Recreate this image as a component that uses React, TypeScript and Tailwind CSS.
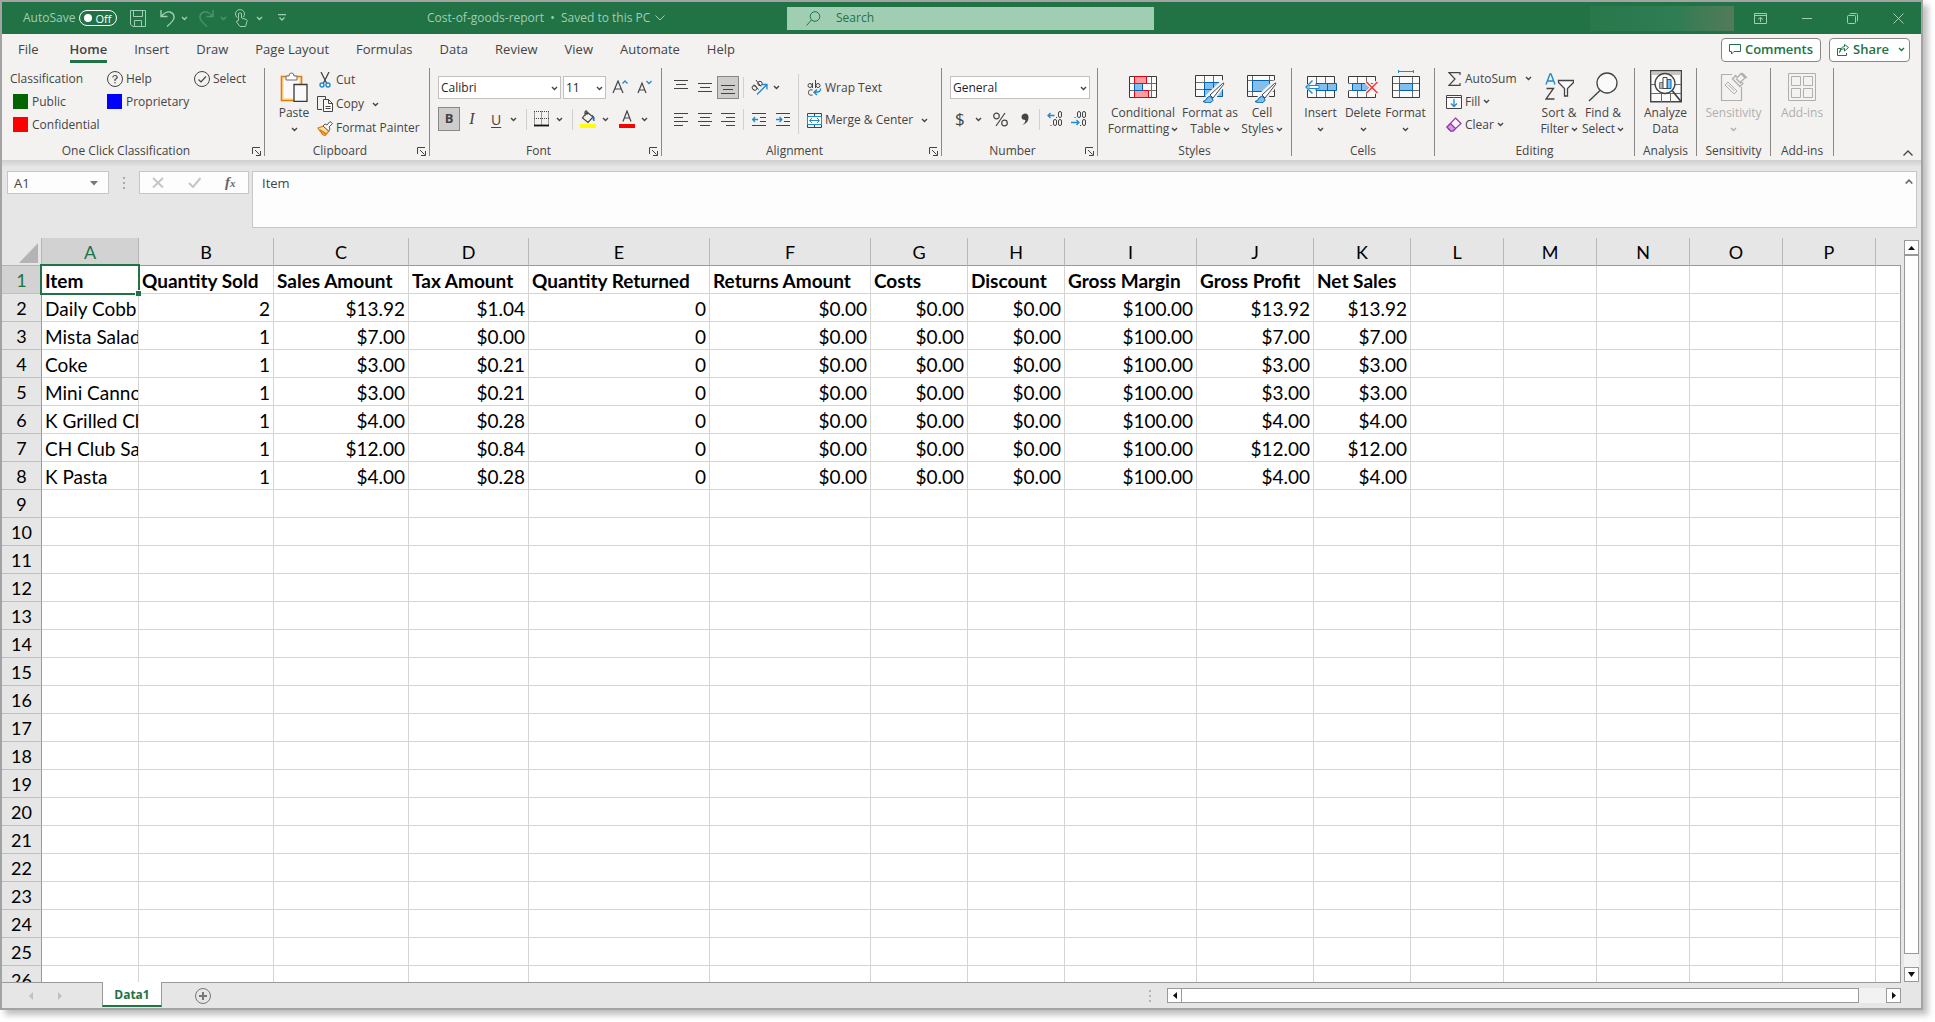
import type { ReactNode } from "react"
import clsx from "clsx"

const tabs = ["File", "Home", "Insert", "Draw", "Page Layout", "Formulas", "Data", "Review", "View", "Automate", "Help"]

const columns = [
  { id: "A", width: "w-[97px]" },
  { id: "B", width: "w-[135px]" },
  { id: "C", width: "w-[135px]" },
  { id: "D", width: "w-[120px]" },
  { id: "E", width: "w-[181px]" },
  { id: "F", width: "w-[161px]" },
  { id: "G", width: "w-[97px]" },
  { id: "H", width: "w-[97px]" },
  { id: "I", width: "w-[132px]" },
  { id: "J", width: "w-[117px]" },
  { id: "K", width: "w-[97px]" },
  { id: "L", width: "w-[93px]" },
  { id: "M", width: "w-[93px]" },
  { id: "N", width: "w-[93px]" },
  { id: "O", width: "w-[93px]" },
  { id: "P", width: "w-[93px]" },
  { id: "", width: "" },
]

const sheet = [
  ["Item", "Quantity Sold", "Sales Amount", "Tax Amount", "Quantity Returned", "Returns Amount", "Costs", "Discount", "Gross Margin", "Gross Profit", "Net Sales"],
  ["Daily Cobb", "2", "$13.92", "$1.04", "0", "$0.00", "$0.00", "$0.00", "$100.00", "$13.92", "$13.92"],
  ["Mista Salad", "1", "$7.00", "$0.00", "0", "$0.00", "$0.00", "$0.00", "$100.00", "$7.00", "$7.00"],
  ["Coke", "1", "$3.00", "$0.21", "0", "$0.00", "$0.00", "$0.00", "$100.00", "$3.00", "$3.00"],
  ["Mini Canno", "1", "$3.00", "$0.21", "0", "$0.00", "$0.00", "$0.00", "$100.00", "$3.00", "$3.00"],
  ["K Grilled Ch", "1", "$4.00", "$0.28", "0", "$0.00", "$0.00", "$0.00", "$100.00", "$4.00", "$4.00"],
  ["CH Club Sa", "1", "$12.00", "$0.84", "0", "$0.00", "$0.00", "$0.00", "$100.00", "$12.00", "$12.00"],
  ["K Pasta", "1", "$4.00", "$0.28", "0", "$0.00", "$0.00", "$0.00", "$100.00", "$4.00", "$4.00"],
]

const ROWS = 26

/* ---------- small pieces ---------- */

function Svg({ w, h, className, children }: { w: number; h: number; className?: string; children: ReactNode }) {
  return (
    <svg width={w} height={h} viewBox={`0 0 ${w} ${h}`} fill="none" stroke="currentColor" className={clsx("shrink-0", className)} aria-hidden="true">
      {children}
    </svg>
  )
}

function Chevron({ className }: { className?: string }) {
  return (
    <Svg w={7} h={5} className={className}>
      <path d="M1 1l2.500 2.500L6 1" strokeWidth="1.400" />
    </Svg>
  )
}

function Launcher({ label }: { label: string }) {
  return (
    <button aria-label={label} className="absolute right-[3px] bottom-0">
      <Svg w={9} h={9}>
        <path d="M.5 7V.5H8M3 3l4.500 4.500M8.500 4v4.500H4" />
      </Svg>
    </button>
  )
}

function Group({ title, width, launcher, children }: { title: string; width: string; launcher?: boolean; children: ReactNode }) {
  return (
    <section className={clsx("relative flex shrink-0 flex-col border-r border-[#8a8886]", width)}>
      <div className="h-[75px] shrink-0">{children}</div>
      <div className={clsx("shrink-0 text-center leading-4", launcher && "pr-[14px]")}>{title}</div>
      {launcher && <Launcher label={`${title} settings`} />}
    </section>
  )
}

function Big({ icon, lines, chevron, width, disabled }: { icon: ReactNode; lines: string[]; chevron?: boolean; width: string; disabled?: boolean }) {
  return (
    <button disabled={disabled} className={clsx("flex shrink-0 flex-col items-center whitespace-nowrap leading-4", width, disabled && "text-[#b1afad]")}>
      <span className="flex h-[37px] items-center">{icon}</span>
      <span>{lines[0]}</span>
      <span className="flex h-4 items-center gap-[2px]">
        {lines[1]}
        {chevron && <Chevron />}
      </span>
    </button>
  )
}

function Small({ icon, label, chevron, wide }: { icon: ReactNode; label: string; chevron?: boolean; wide?: boolean }) {
  return (
    <button className="flex h-6 items-center whitespace-nowrap">
      <span className="mr-[3px] flex w-4 justify-center">{icon}</span>
      {label}
      {chevron && <Chevron className={wide ? "ml-2" : "ml-[3px]"} />}
    </button>
  )
}

function Divider() {
  return <span className="h-[21px] w-px bg-[#d2d0ce]" />
}

function Picker({ label, value, width }: { label: string; value: string; width: string }) {
  return (
    <label className={clsx("relative block", width)}>
      <select aria-label={label} className="h-[23px] w-full appearance-none border border-[#c3c1bf] bg-white pl-[2px] text-[#1f1f1f] outline-none">
        <option>{value}</option>
      </select>
      <Chevron className="pointer-events-none absolute top-[10px] right-[3px]" />
    </label>
  )
}

function Swatch({ color }: { color: string }) {
  return <span className={clsx("size-[15px]", color)} />
}

/* ---------- icons ---------- */

function LinesIcon({ rows, y = 1 }: { rows: number[][]; y?: number }) {
  return (
    <Svg w={14} h={15}>
      {rows.map(([a, b], i) => (
        <path key={i} d={`M${a} ${y + i * 4 - 0.5}H${b}`} />
      ))}
    </Svg>
  )
}

const indentRows = <path d="M0 1.500h14M8 5.500h6M8 9.500h6M0 13.500h14" />

function BrushIcon() {
  return (
    <>
      <path d="M13 21L27 7.500q3-1.500 2 1.500L17 25z" fill="#fff" stroke="#f3f2f1" strokeWidth="4" />
      <path d="M15 20L27.500 8.500q2-1.500 1 1L18 23z" fill="#fff" stroke="#444" />
      <path d="M8 26.500q3-.5 4-3.500 2-3 5-.5 2.500 3-1 5-4 1.500-8-1z" fill="#83beec" stroke="#0063b1" />
    </>
  )
}

function PasteIcon() {
  return (
    <Svg w={28} h={30}>
      <path d="M1.500 4.500h20v24h-20z" fill="#fce5a8" stroke="#e07b10" strokeWidth="1.600" />
      <path d="M4 7h15v19H4z" fill="#fafafa" stroke="none" />
      <path d="M6 8V4h3q0-3 2.500-3T14 4h3v4z" fill="#fff" stroke="#6b6b6b" />
      <path d="M14 12.500h13v17H14z" fill="#fafafa" stroke="#3b3a39" strokeWidth="1.300" />
    </Svg>
  )
}

function CutIcon() {
  return (
    <Svg w={12} h={16}>
      <path d="M2 0l5.500 11M10 0L4.500 11" strokeWidth="1.300" />
      <circle cx="3" cy="13" r="2" stroke="#1e8bcd" strokeWidth="1.400" />
      <circle cx="9" cy="13" r="2" stroke="#1e8bcd" strokeWidth="1.400" />
    </Svg>
  )
}

function CopyIcon() {
  return (
    <Svg w={16} h={16}>
      <path d="M5 13.500H.5V.5h8V3" />
      <path d="M6.500 3.500h5l4 4v8h-9z" fill="#fafafa" />
      <path d="M11.500 3.500v4h4M8.500 10.500h5M8.500 12.500h5" />
    </Svg>
  )
}

function PainterIcon() {
  return (
    <Svg w={16} h={15}>
      <path d="M1 7l6-2 5 5-4 4.500q-3-1-4-3.500Q2 9 1 7z" fill="#fce0a0" stroke="#e07b10" strokeWidth="1.300" />
      <path d="M3 9l6 4" stroke="#e07b10" strokeWidth="1.600" />
      <path d="M6 5l2-2 2 1 3-3.500 2.500 2L12 6l1 2-1.500 2z" fill="#fff" stroke="#555" />
    </Svg>
  )
}

function TableBase() {
  return (
    <>
      <path d="M.5.5h27v21H.5z" fill="#fafafa" stroke="#3b3a39" />
      <path d="M1 7.500h26M1 14.500h26M9.500 1v20M18.500 1v20" stroke="#6b6b6b" />
    </>
  )
}

function ConditionalIcon() {
  return (
    <Svg w={28} h={22}>
      <path d="M.5.5h27v21H.5z" fill="#fafafa" stroke="#3b3a39" />
      <path d="M1 7.500h26M1 14.500h26M5.500 1v20M22.500 1v20" stroke="#6b6b6b" />
      <path d="M5.500.5h12v7h-12zM5.500 14.500h14v7h-14z" fill="#ff9ba0" stroke="#e3000f" />
      <path d="M5.500 7.500h8v7h-8z" fill="#83beec" stroke="#0063b1" />
    </Svg>
  )
}

function FormatTableIcon() {
  return (
    <Svg w={30} h={28} className="mt-[5px]">
      <TableBase />
      <path d="M9.500 7.500h18v14h-18z" fill="#83beec" stroke="#0063b1" />
      <path d="M9.500 14.500h18M18.500 7.500v14" stroke="#0063b1" />
      <BrushIcon />
    </Svg>
  )
}

function CellStylesIcon() {
  return (
    <Svg w={30} h={28} className="mt-[5px]">
      <path d="M.5.5h27v21H.5z" fill="#fafafa" stroke="#3b3a39" />
      <path d="M1 5.500h26M1 16.500h26M5.500 1v20M22.500 1v20" stroke="#6b6b6b" />
      <path d="M5.500 5.500h17v11h-17z" fill="#83beec" stroke="#0063b1" />
      <BrushIcon />
    </Svg>
  )
}

function InsertIcon() {
  return (
    <Svg w={32} h={22}>
      <path d="M2.500.5h27v21h-27z" fill="#fafafa" stroke="#3b3a39" />
      <path d="M11.500 1v20M20.500 1v20" stroke="#6b6b6b" />
      <path d="M11 7.500h20.500v7H11z" fill="#83beec" stroke="#0063b1" />
      <path d="M22.500 8v6" stroke="#0063b1" />
      <path d="M0 8h3v6H0z" fill="#f3f2f1" stroke="none" />
      <path d="M14 9.500H4v3h10z" fill="#fff" stroke="#1e8bcd" />
      <path d="M7.500 4.500L1 11l6.500 6.500" stroke="#1e8bcd" strokeWidth="1.400" />
    </Svg>
  )
}

function DeleteIcon() {
  return (
    <Svg w={30} h={22}>
      <path d="M.5 7V.5h27V7M.5 15v6.500h27V15" fill="#fafafa" stroke="#3b3a39" />
      <path d="M.5 7.500h27M.5 14.500h27M9.500 1v6M18.500 1v6M9.500 15v6M18.500 15v6" stroke="#6b6b6b" />
      <path d="M4.500 7.500h14l3 3.500-3 3.500h-14z" fill="#83beec" stroke="#0063b1" />
      <path d="M13.500 8v6" stroke="#0063b1" />
      <path d="M18.500 6l11 11M29.500 6l-11 11" stroke="#f3f2f1" strokeWidth="4" />
      <path d="M18.500 6l11 11M29.500 6l-11 11" stroke="#f03a3e" strokeWidth="1.500" />
    </Svg>
  )
}

function FormatIcon() {
  return (
    <Svg w={28} h={28} className="-mt-[6px]">
      <path d="M6.500 0v3M21.500 0v3M6.500 1.500h15" stroke="#1e8bcd" />
      <path d="M.5 6.500h27v21H.5z" fill="#fafafa" stroke="#3b3a39" />
      <path d="M1 13.500h26M1 20.500h26M7.500 7v20M20.500 7v20" stroke="#6b6b6b" />
      <path d="M7.500 13.500h13v7h-13z" fill="#83beec" stroke="#0063b1" />
    </Svg>
  )
}

function SortIcon() {
  return (
    <Svg w={29} h={27}>
      <path d="M1 11.500L5 1h1l4 10.500M2.500 8h6" stroke="#1e8bcd" strokeWidth="1.400" />
      <path d="M1.500 15.500h7L1 26h8.500" strokeWidth="1.300" />
      <path d="M13.500 7.500h15v2l-6 6V23h-3v-7.500l-6-6z" fill="#fafafa" strokeWidth="1.300" />
    </Svg>
  )
}

function FindIcon() {
  return (
    <Svg w={30} h={30}>
      <circle cx="19" cy="11" r="10" fill="#fafafa" strokeWidth="1.300" />
      <path d="M12 18.500L1 29" strokeWidth="1.400" />
    </Svg>
  )
}

function AnalyzeIcon() {
  return (
    <Svg w={32} h={33}>
      <path d="M.7.7h30.600v31H.7z" fill="#fafafa" strokeWidth="1.400" />
      <path d="M1.500 1.500h29v3.500h-29z" fill="#c8c6c4" stroke="none" />
      <path d="M1 14.500h30M1 23.500h30M11.500 23v9M20.500 23v9" stroke="#6b6b6b" />
      <circle cx="15" cy="13.500" r="10" fill="#fafafa" strokeWidth="1.300" />
      <path d="M9.500 12.500h4v6h-4z" fill="#b5b3b1" stroke="#797775" />
      <path d="M17 9.500h4v9h-4z" fill="#83beec" stroke="#0063b1" />
      <path d="M13 7.500h4v11h-4z" fill="#fff" />
      <path d="M22.500 21L31 31.500" strokeWidth="1.800" />
    </Svg>
  )
}

function SensitivityIcon() {
  return (
    <Svg w={28} h={30}>
      <path d="M12 2.500H1.500v26h20V15" strokeWidth="1.200" />
      <path d="M5 13l3-3 9 9-3 3zM8 12.500l6.500 6.500" />
      <path d="M12.500 7l3-3.500 2 2L21 1.500l4 4.500-4 3.500 2 2-3 3zM22 1l5 5M16 6.500l5 5" strokeWidth="1.300" />
    </Svg>
  )
}

function AddinsIcon() {
  return (
    <Svg w={28} h={28}>
      <path d="M.5.5h27v27H.5zM3.500 3.500h9v9h-9zM15.500 3.500h9v9h-9zM3.500 15.500h9v9h-9zM15.500 15.500h9v9h-9z" />
    </Svg>
  )
}

/* ---------- bars ---------- */

function TitleBar() {
  return (
    <header className="flex h-8 items-center bg-[#217346] text-[#a0ceb3]">
      <div className="flex w-[425px] items-center pl-[21px]">
        <span>AutoSave</span>
        <button className="ml-1 flex h-4 w-[38px] items-center justify-between rounded-full border border-white pr-[5px] pl-[4px] text-[11px] leading-none text-white">
          <span className="size-2 rounded-full bg-white" />
          Off
        </button>
        <button aria-label="Save" className="ml-[13px]">
          <Svg w={16} h={17}>
            <path d="M.5.5h15v16H3l-2.500-2zM3.500.5v6h9v-6M4.500 16.500v-6h7v6" />
          </Svg>
        </button>
        <button aria-label="Undo" className="ml-[14px] flex items-center gap-[6px]">
          <Svg w={15} h={17}>
            <path d="M1 0v6.500h6.500M1 6.500Q6 1 10 2q4.500 1.500 4 6-.5 3-7 8.500" strokeWidth="1.400" />
          </Svg>
          <Chevron />
        </button>
        <button aria-label="Redo" className="ml-[11px] flex items-center gap-[6px] text-[#4f9470]">
          <Svg w={15} h={17}>
            <path d="M14 0v6.500H7.500M14 6.500Q9 1 5 2 .5 3.500 1 8q.5 3 7 8.500" strokeWidth="1.400" />
          </Svg>
          <Chevron />
        </button>
        <button aria-label="Touch mode" className="ml-2 flex items-center gap-[8px]">
          <Svg w={13} h={18}>
            <path d="M2 8.500Q.5 7 .5 5a4.500 4.500 0 019 0q0 1.500-1 3" />
            <path d="M3.500 11.500V4.500q1.500-1.500 3 0V9l5 1.500q.8.500.5 2l-1.500 5H5L1.500 13q0-1.500 2-1.500z" />
          </Svg>
          <Chevron />
        </button>
        <button aria-label="Customize toolbar" className="ml-[15px]">
          <Svg w={8} h={8}>
            <path d="M0 .5h8M1.500 3.500L4 6l2.500-2.500" strokeWidth="1.300" />
          </Svg>
        </button>
      </div>
      <button className="flex w-[360px] items-center gap-[5px] whitespace-nowrap">
        <span>Cost-of-goods-report&nbsp; •&nbsp; Saved to this PC</span>
        <Svg w={10} h={6}>
          <path d="M.5.5L5 5 9.500.5" />
        </Svg>
      </button>
      <label className="flex h-[23px] w-[367px] items-center bg-[#a0ceb3] pl-[19px] text-[#217346]">
        <Svg w={15} h={15}>
          <circle cx="9" cy="5.500" r="4.800" />
          <path d="M5.500 9L.5 14.500" />
        </Svg>
        <input aria-label="Search" placeholder="Search" className="ml-[15px] min-w-0 flex-1 outline-none placeholder:text-[#217346]" />
      </label>
      <div className="ml-auto h-[25px] w-[144px] bg-linear-to-r from-[#28784c] via-[#2f7d53] via-60% to-[#527a5a]" />
      <div className="flex items-center gap-[35px] pr-[17px] pl-5">
        <button aria-label="Ribbon display options">
          <Svg w={13} h={11}>
            <path d="M.5.5h12v10H.5zM.5 2.500h12M6.500 9V4.500M4 6.500l2.500-2 2.500 2" />
          </Svg>
        </button>
        <button aria-label="Minimize">
          <Svg w={10} h={11}>
            <path d="M0 5.500h10" />
          </Svg>
        </button>
        <button aria-label="Restore">
          <Svg w={11} h={11}>
            <rect x=".5" y="2.500" width="8" height="8" rx="1" />
            <path d="M2.500 1q.5-.5 1-.5h6q1 0 1 1v6q0 .7-.7 1" />
          </Svg>
        </button>
        <button aria-label="Close">
          <Svg w={11} h={11}>
            <path d="M.5.5l10 10M10.500.5l-10 10" />
          </Svg>
        </button>
      </div>
    </header>
  )
}

function TabBar() {
  return (
    <nav className="flex h-[31px] items-center bg-[#f3f2f1] pr-[11px] pl-4 text-[13px]">
      <div className="flex gap-[27px] pt-[2px]">
        {tabs.map((tab) => (
          <a
            key={tab}
            href="#"
            className={clsx(
              "border-b-[3px] leading-[21px] whitespace-nowrap",
              tab === "Home" ? "ml-1 border-[#217346] font-semibold" : "border-transparent",
            )}
          >
            {tab}
          </a>
        ))}
      </div>
      <div className="ml-auto flex gap-2 font-semibold text-[#217346]">
        <button className="flex h-6 w-[100px] items-center justify-center gap-1 rounded border border-[#8a8886] bg-white">
          <Svg w={12} h={11}>
            <path d="M.5.5h11v7H5L2.500 10V7.500h-2z" />
          </Svg>
          Comments
        </button>
        <button className="flex h-6 w-[81px] items-center rounded border border-[#8a8886] bg-white pr-1 pl-[7px]">
          <Svg w={12} h={12} className="mr-1">
            <path d="M4 4.500H.5v7h9V9M2.500 8.500q1-4 5-4V7l4-3.500-4-3v2q-4 .5-5 6z" />
          </Svg>
          Share
          <Chevron className="ml-auto" />
        </button>
      </div>
    </nav>
  )
}

function Ribbon() {
  return (
    <div className="relative flex h-[95px] bg-[#f3f2f1] pt-[3px] pb-1">
      <Group title="One Click Classification" width="w-[263px]" launcher>
        <div className="-mt-px grid grid-cols-[97px_87px_auto] auto-rows-[23px] items-center pl-2 whitespace-nowrap">
          <span>Classification</span>
          <button className="flex items-center gap-[3px]">
            <Svg w={16} h={16}>
              <circle cx="8" cy="8" r="7.500" />
              <path d="M5.700 6.500Q6 4.500 8 4.500t2.300 1.800Q10.300 7.500 8 8.500V10M8 11v1.300" strokeWidth="1.200" />
            </Svg>
            Help
          </button>
          <button className="flex items-center gap-[3px]">
            <Svg w={16} h={16}>
              <circle cx="8" cy="8" r="7.500" />
              <path d="M4.500 8.500L7 11l5-5.500" strokeWidth="1.200" />
            </Svg>
            Select
          </button>
          <button className="flex items-center gap-1 pl-[3px]">
            <Swatch color="bg-[#006400]" />
            Public
          </button>
          <button className="col-span-2 flex items-center gap-1">
            <Swatch color="bg-[#0000ff]" />
            Proprietary
          </button>
          <button className="flex items-center gap-1 pl-[3px]">
            <Swatch color="bg-[#ff0000]" />
            Confidential
          </button>
        </div>
      </Group>

      <Group title="Clipboard" width="w-[165px]" launcher>
        <div className="flex pl-[9px]">
          <Big icon={<PasteIcon />} lines={["Paste"]} chevron width="w-[40px]" />
          <div className="flex flex-col items-start pl-[3px]">
            <Small icon={<CutIcon />} label="Cut" />
            <Small icon={<CopyIcon />} label="Copy" chevron wide />
            <Small icon={<PainterIcon />} label="Format Painter" />
          </div>
        </div>
      </Group>

      <Group title="Font" width="w-[232px]" launcher>
        <div className="flex flex-col gap-2 pt-2 pl-2">
          <div className="flex items-center">
            <Picker label="Font" value="Calibri" width="w-[123px]" />
            <Picker label="Font size" value="11" width="ml-[2px] w-[43px]" />
            <button aria-label="Increase font size" className="ml-[6px]">
              <Svg w={16} h={16}>
                <path d="M1 13L6 1l5 12M2.700 9h6.600" strokeWidth="1.200" />
                <path d="M10.500 3.500L13 1l2.500 2.500" stroke="#1e8bcd" strokeWidth="1.300" />
              </Svg>
            </button>
            <button aria-label="Decrease font size" className="ml-[9px]">
              <Svg w={15} h={16}>
                <path d="M1 13L5 3l4 10M2.500 10h5" strokeWidth="1.200" />
                <path d="M9.500 1L12 3.500 14.500 1" stroke="#1e8bcd" strokeWidth="1.300" />
              </Svg>
            </button>
          </div>
          <div className="flex items-center">
            <button className="h-6 w-[22px] border border-[#8a8886] bg-[#cfcdcb] text-[13px] font-bold">B</button>
            <button className="ml-[7px] w-[10px] font-['Liberation_Serif',serif] text-[16px] italic">I</button>
            <button className="ml-[14px] flex items-center gap-[9px] text-[14px]">
              <span className="w-[10px] underline underline-offset-2">U</span>
              <Chevron />
            </button>
            <span className="ml-[9px] flex">
              <Divider />
            </span>
            <button aria-label="Borders" className="ml-[7px] flex items-center gap-[7px]">
              <Svg w={15} h={16}>
                <path d="M.5.500v14M14.500.5v14M7.500.5v14M0 .5h15M0 7.500h15" strokeDasharray="1 1" />
                <path d="M0 14.500h15" stroke="#111" strokeWidth="1.800" />
              </Svg>
              <Chevron />
            </button>
            <span className="ml-[9px] flex">
              <Divider />
            </span>
            <button aria-label="Fill color" className="ml-[7px] flex items-center gap-[6px]">
              <Svg w={16} h={18}>
                <path d="M7 2l6 5-5 5.500L2.500 8zM7 5V1.500Q6 0 5 2v4" strokeWidth="1.200" />
                <path d="M12 5q3 1 2 6-1-1-1-3" fill="#1e6fb8" stroke="#1e6fb8" />
                <path d="M0 16h16" stroke="#ffff00" strokeWidth="4" />
              </Svg>
              <Chevron />
            </button>
            <button aria-label="Font color" className="ml-[10px] flex items-center gap-[6px]">
              <Svg w={16} h={18}>
                <path d="M4 11.500L8 1l4 10.500M5.300 8h5.400" strokeWidth="1.200" />
                <path d="M0 16h16" stroke="#ff0000" strokeWidth="4" />
              </Svg>
              <Chevron />
            </button>
          </div>
        </div>
      </Group>

      <Group title="Alignment" width="w-[280px]" launcher>
        <div className="flex pl-[7px]">
          <div className="flex flex-col gap-2 pt-2">
            <div className="flex h-[23px] items-center">
              <button aria-label="Top align" className="flex w-6 justify-center">
                <LinesIcon rows={[[0, 14], [2, 12], [0, 14]]} />
              </button>
              <button aria-label="Middle align" className="flex w-6 justify-center">
                <LinesIcon y={4} rows={[[0, 14], [2, 12], [0, 14]]} />
              </button>
              <button aria-label="Bottom align" className="flex h-[23px] w-[22px] items-center justify-center border border-[#8a8886] bg-[#cfcdcb]">
                <LinesIcon y={6} rows={[[0, 14], [2, 12], [0, 14]]} />
              </button>
              <span className="mr-[7px] ml-1 flex">
                <Divider />
              </span>
              <button aria-label="Orientation" className="flex items-center gap-[5px]">
                <Svg w={17} h={17}>
                  <ellipse cx="3.500" cy="9" rx="2" ry="2.500" transform="rotate(-45 3.500 9)" />
                  <path d="M3 5.500l4.500 5M5 1l5 6.500" />
                  <circle cx="9" cy="4.500" r="2.200" />
                  <path d="M6 15.500L15.500 6M11 5.500h5v5" stroke="#1e8bcd" strokeWidth="1.300" />
                </Svg>
                <Chevron />
              </button>
            </div>
            <div className="flex h-6 items-center">
              <button aria-label="Align left" className="flex w-6 justify-center">
                <LinesIcon rows={[[0, 14], [0, 9], [0, 14], [0, 9]]} y={2} />
              </button>
              <button aria-label="Center" className="flex w-6 justify-center">
                <LinesIcon rows={[[0, 14], [2, 12], [0, 14], [2, 12]]} y={2} />
              </button>
              <button aria-label="Align right" className="flex w-[22px] justify-center">
                <LinesIcon rows={[[0, 14], [5, 14], [0, 14], [5, 14]]} y={2} />
              </button>
              <span className="mr-2 ml-1 flex">
                <Divider />
              </span>
              <button aria-label="Decrease indent">
                <Svg w={14} h={15}>
                  {indentRows}
                  <path d="M6 7.500H1M3 5L.7 7.500 3 10" stroke="#1e8bcd" strokeWidth="1.300" />
                </Svg>
              </button>
              <button aria-label="Increase indent" className="ml-[10px]">
                <Svg w={14} h={15}>
                  {indentRows}
                  <path d="M0 7.500h5.500M3.500 5l2.300 2.500L3.500 10" stroke="#1e8bcd" strokeWidth="1.300" />
                </Svg>
              </button>
            </div>
          </div>
          <span className="mt-[6px] ml-2 h-[60px] w-px bg-[#d2d0ce]" />
          <div className="flex flex-col items-start gap-2 pt-2 pl-[7px]">
            <Small
              label="Wrap Text"
              icon={
                <Svg w={15} h={16}>
                  <circle cx="3" cy="5.500" r="2" />
                  <path d="M5.500 3v5M8.500 0v8M5.500 10q-4-1-4 2.500t4 2.500" />
                  <circle cx="11" cy="5.500" r="2" />
                  <path d="M13.500 8.500q1 4-6 3.800M10 9.500l-3 2.800 3 2.700" stroke="#1e8bcd" strokeWidth="1.400" />
                </Svg>
              }
            />
            <Small
              label="Merge & Center"
              chevron
              wide
              icon={
                <Svg w={15} h={15}>
                  <path d="M.5.5h14v14H.5zM7.500.5v3M7.500 11.500v3" />
                  <path d="M.5 3.500h14v8H.5z" fill="#fff" stroke="#1e8bcd" />
                  <path d="M3 7.500h9M5 5L2.500 7.500 5 10M10 5l2.500 2.500L10 10" stroke="#1e8bcd" />
                </Svg>
              }
            />
          </div>
        </div>
      </Group>

      <Group title="Number" width="w-[156px]" launcher>
        <div className="flex flex-col gap-2 px-2 pt-2">
          <Picker label="Number format" value="General" width="w-[140px]" />
          <div className="flex h-6 items-center">
            <button className="ml-[5px] flex items-center gap-[10px] text-[17px] leading-6">
              $
              <Chevron />
            </button>
            <button aria-label="Percent style" className="ml-[11px]">
              <Svg w={15} h={15}>
                <circle cx="3.500" cy="4" r="2.800" strokeWidth="1.200" />
                <circle cx="11.500" cy="11" r="2.800" strokeWidth="1.200" />
                <path d="M12 1L3 14" strokeWidth="1.200" />
              </Svg>
            </button>
            <button aria-label="Comma style" className="ml-[13px]">
              <Svg w={8} h={13}>
                <path d="M4 .5q3.500 0 3.500 4Q7.500 10 1.500 12q3-2.500 3-5Q.5 7 .5 4T4 .5z" fill="currentColor" stroke="none" />
              </Svg>
            </button>
            <span className="mr-[7px] ml-[10px] flex">
              <Divider />
            </span>
            <button aria-label="Increase decimal">
              <Svg w={16} h={16}>
                <path d="M7.500 4.500H1M3.500 2L1 4.500 3.500 7" stroke="#1e8bcd" strokeWidth="1.300" />
                <rect x="11.500" y=".500" width="3" height="6" rx="1.500" />
                <rect x="6.500" y="8.500" width="3" height="6" rx="1.500" />
                <rect x="11.500" y="8.500" width="3" height="6" rx="1.500" />
                <path d="M9 6.500h1M3.500 14.500h1" />
              </Svg>
            </button>
            <button aria-label="Decrease decimal" className="ml-2">
              <Svg w={16} h={16}>
                <path d="M0 11.500h8M5.500 9L8 11.500 5.500 14" stroke="#1e8bcd" strokeWidth="1.300" />
                <rect x="6.500" y=".500" width="3" height="6" rx="1.500" />
                <rect x="11.500" y=".500" width="3" height="6" rx="1.500" />
                <rect x="11.500" y="8.500" width="3" height="6" rx="1.500" />
                <path d="M3.500 6.500h1M9 14.500h1" />
              </Svg>
            </button>
          </div>
        </div>
      </Group>

      <Group title="Styles" width="w-[194px]">
        <div className="flex pl-[7px]">
          <Big icon={<ConditionalIcon />} lines={["Conditional", "Formatting"]} chevron width="w-[76px]" />
          <Big icon={<FormatTableIcon />} lines={["Format as", "Table"]} chevron width="w-[58px]" />
          <Big icon={<CellStylesIcon />} lines={["Cell", "Styles"]} chevron width="w-[46px]" />
        </div>
      </Group>

      <Group title="Cells" width="w-[143px]">
        <div className="flex pl-[7px]">
          <Big icon={<InsertIcon />} lines={["Insert"]} chevron width="w-[43px]" />
          <Big icon={<DeleteIcon />} lines={["Delete"]} chevron width="w-[42px]" />
          <Big icon={<FormatIcon />} lines={["Format"]} chevron width="w-[43px]" />
        </div>
      </Group>

      <Group title="Editing" width="w-[200px]">
        <div className="flex pl-[11px]">
          <div className="-mt-px grid w-[91px] auto-rows-[23px] items-center justify-items-start">
            <Small
              label="AutoSum"
              chevron
              wide
              icon={
                <Svg w={13} h={14}>
                  <path d="M12 3V.7H1L7 7l-6 6.300h11V11" strokeWidth="1.200" />
                </Svg>
              }
            />
            <Small
              label="Fill"
              chevron
              icon={
                <Svg w={16} h={14}>
                  <path d="M.5.5h15v13H.5zM.5 2.500h15" fill="#fafafa" />
                  <path d="M8 4v7.500M5 8.500l3 3 3-3" stroke="#1e8bcd" strokeWidth="1.300" />
                </Svg>
              }
            />
            <Small
              label="Clear"
              chevron
              icon={
                <Svg w={16} h={15}>
                  <path d="M9.500 1L15 6.500 7 14H4.500L1 10z" fill="#fafafa" stroke="#9b2fae" strokeWidth="1.200" />
                  <path d="M4.500 6.500l5 5L7 14H4.500L1 10z" fill="#d59ae0" stroke="#9b2fae" strokeWidth="1.200" />
                </Svg>
              }
            />
          </div>
          <Big icon={<SortIcon />} lines={["Sort &", "Filter"]} chevron width="w-[44px]" />
          <Big icon={<FindIcon />} lines={["Find &", "Select"]} chevron width="w-[44px]" />
        </div>
      </Group>

      <Group title="Analysis" width="w-[62px]">
        <Big icon={<AnalyzeIcon />} lines={["Analyze", "Data"]} width="w-full" />
      </Group>
      <Group title="Sensitivity" width="w-[74px]">
        <Big icon={<SensitivityIcon />} lines={["Sensitivity"]} chevron disabled width="w-full" />
      </Group>
      <Group title="Add-ins" width="w-[63px]">
        <Big icon={<AddinsIcon />} lines={["Add-ins"]} disabled width="w-full" />
      </Group>

      <button aria-label="Collapse ribbon" className="mr-2 ml-auto self-end">
        <Svg w={10} h={6}>
          <path d="M.5 5.500L5 1l4.500 4.500" strokeWidth="1.300" />
        </Svg>
      </button>
    </div>
  )
}

function FormulaBar() {
  return (
    <div className="flex items-start bg-linear-to-b from-[#cfcfcf] to-[#e6e6e6] to-[7px] pt-[11px] pr-1 pb-[10px] pl-[5px] text-[13px] text-[#444]">
      <label className="relative w-[102px]">
        <input aria-label="Name box" defaultValue="A1" className="h-[23px] w-full border border-[#c6c6c6] bg-[#fdfdfd] pl-[6px] outline-none" />
        <Svg w={8} h={5} className="pointer-events-none absolute top-[10px] right-[11px]">
          <path d="M0 0h8L4 4.500z" fill="#777" stroke="none" />
        </Svg>
      </label>
      <Svg w={3} h={12} className="mt-[6px] ml-[14px]">
        <path d="M1 0v12" stroke="#aaa" strokeWidth="2" strokeDasharray="2 3" />
      </Svg>
      <div className="ml-[13px] flex h-[23px] w-[110px] items-center border border-[#c6c6c6] bg-[#fdfdfd] pl-3">
        <button aria-label="Cancel">
          <Svg w={12} h={11}>
            <path d="M1 1l10 9.500M11 1L1 10.500" stroke="#c6c6c6" strokeWidth="2" />
          </Svg>
        </button>
        <button aria-label="Enter" className="ml-6">
          <Svg w={13} h={11}>
            <path d="M1 6l4 4 7.500-9" stroke="#c6c6c6" strokeWidth="2" />
          </Svg>
        </button>
        <button className="ml-6 font-['Liberation_Serif',serif] text-[15px] font-bold italic leading-none text-[#666]">
          f<span className="text-[11px]">x</span>
        </button>
      </div>
      <div className="relative ml-[3px] flex-1">
        <textarea aria-label="Formula" defaultValue="Item" className="block h-[57px] w-full resize-none border border-[#c6c6c6] bg-[#fdfdfd] px-[9px] py-[2px] leading-[18px] outline-none" />
        <button aria-label="Collapse formula bar" className="absolute top-2 right-1">
          <Svg w={8} h={5}>
            <path d="M.7 4.500L4 1.200l3.300 3.300" stroke="#666" strokeWidth="1.600" />
          </Svg>
        </button>
      </div>
    </div>
  )
}

function Grid() {
  return (
    <div className="min-w-0 flex-1 overflow-hidden">
      <table className="w-full table-fixed border-separate border-spacing-0 font-['Lato',sans-serif] text-[19px] leading-[25px] text-black">
        <thead>
          <tr className="h-7">
            <th className="w-10 border-r border-b border-[#b5b5b5] p-0">
              <Svg w={19} h={20} className="ml-auto mr-[3px] mt-[2px]">
                <path d="M19 0v20H0z" fill="#b4b4b4" stroke="none" />
              </Svg>
            </th>
            {columns.map((col, i) => (
              <th
                key={i}
                className={clsx(
                  "border-b border-[#999] px-0 pt-[2px] pb-0 text-[18px] font-normal",
                  col.width,
                  i < columns.length - 1 && "border-r border-r-[#b8b8b8]",
                  i === 0 && "bg-[#d2d2d2] text-[#217346]",
                )}
              >
                {col.id}
              </th>
            ))}
          </tr>
        </thead>
        <tbody>
          {Array.from({ length: ROWS }, (_, r) => (
            <tr key={r} className="h-7">
              <th
                className={clsx(
                  "border-r border-b border-[#c0c0c0] border-r-[#999] px-0 pt-[2px] pb-0 text-[18px] font-normal",
                  r === 0 ? "bg-[#d2d2d2] text-[#217346]" : "bg-[#e6e6e6]",
                )}
              >
                {r + 1}
              </th>
              {columns.map((_col, c) => (
                <td
                  key={c}
                  className={clsx(
                    "relative border-b border-[#d4d4d4] bg-white px-[3px] py-0 whitespace-nowrap",
                    c < columns.length - 1 ? "border-r" : "border-r border-r-[#999]",
                    r === 0 ? "font-bold" : c > 0 && "text-right",
                  )}
                >
                  <div className={clsx("h-[27px] overflow-hidden pt-[2px]", c === 0 && "-mr-[3px]")}>{sheet[r]?.[c]}</div>
                  {r === 0 && c === 0 && (
                    <>
                      <span className="absolute -top-[2px] -right-[2px] -bottom-[2px] -left-[2px] z-10 border-2 border-[#217346]" />
                      <span className="absolute -right-[3px] -bottom-[3px] z-20 size-[6px] border-t border-l border-white bg-[#217346]" />
                    </>
                  )}
                </td>
              ))}
            </tr>
          ))}
        </tbody>
      </table>
    </div>
  )
}

function ScrollBarY() {
  return (
    <div className="flex w-[20px] flex-col pt-[2px] pr-[2px] pl-[3px]">
      <button aria-label="Scroll up" className="flex h-[15px] shrink-0 items-center justify-center border border-[#999] bg-white">
        <Svg w={7} h={4}>
          <path d="M3.500 0L7 4H0z" fill="#111" stroke="none" />
        </Svg>
      </button>
      <div className="flex-1 bg-[#f2f2f2] pb-[13px]">
        <div className="h-full border border-[#999] bg-white" />
      </div>
      <button aria-label="Scroll down" className="flex h-[15px] shrink-0 items-center justify-center border border-[#999] bg-white">
        <Svg w={7} h={5}>
          <path d="M3.500 5L7 0H0z" fill="#111" stroke="none" />
        </Svg>
      </button>
    </div>
  )
}

function StatusRow() {
  return (
    <footer className="flex h-[26px] shrink-0">
      <div className="flex w-[100px] items-center gap-[25px] border-t border-[#999] pl-[27px]">
        <button aria-label="Previous sheet">
          <Svg w={4} h={8}>
            <path d="M4 0v8L0 4z" fill="#c0c0c0" stroke="none" />
          </Svg>
        </button>
        <button aria-label="Next sheet">
          <Svg w={4} h={8}>
            <path d="M0 0v8l4-4z" fill="#c0c0c0" stroke="none" />
          </Svg>
        </button>
      </div>
      <button className="h-[25px] w-[60px] border-x border-b-2 border-x-[#999] border-b-[#217346] bg-white pt-[2px] text-[12px] font-bold text-[#217346]">
        Data1
      </button>
      <div className="flex flex-1 items-center border-t border-[#999] pl-[33px]">
        <button aria-label="New sheet">
          <Svg w={16} h={16}>
            <circle cx="8" cy="8" r="7.500" stroke="#777" />
            <path d="M8 4v8M4 8h8" stroke="#777" strokeWidth="2" />
          </Svg>
        </button>
        <Svg w={3} h={12} className="ml-auto">
          <path d="M1 0v12" stroke="#b5b5b5" strokeWidth="2" strokeDasharray="2 3" />
        </Svg>
        <div className="ml-[15px] flex h-[15px] w-[43%] bg-[#f2f2f2]">
          <button aria-label="Scroll left" className="flex w-[15px] items-center justify-center border border-[#999] bg-white">
            <Svg w={4} h={7}>
              <path d="M4 0v7L0 3.500z" fill="#111" stroke="none" />
            </Svg>
          </button>
          <div className="-ml-px mr-[27px] flex-1 border border-[#999] bg-white" />
          <button aria-label="Scroll right" className="flex w-[15px] items-center justify-center border border-[#999] bg-white">
            <Svg w={4} h={7}>
              <path d="M0 0v7l4-3.500z" fill="#111" stroke="none" />
            </Svg>
          </button>
        </div>
      </div>
      <div className="w-[20px]" />
    </footer>
  )
}

export default function App() {
  return (
    <div className="h-screen bg-white pr-3 pb-3 font-['Open_Sans','Noto_Sans',sans-serif] text-[12px] text-[#444]">
      <div className="flex h-full flex-col overflow-hidden border-2 border-[#a3a3a3] bg-[#e6e6e6] shadow-[5px_5px_6px_rgba(0,0,0,0.25)]">
        <TitleBar />
        <TabBar />
        <Ribbon />
        <FormulaBar />
        <main className="flex min-h-0 flex-1">
          <Grid />
          <ScrollBarY />
        </main>
        <StatusRow />
      </div>
    </div>
  )
}
